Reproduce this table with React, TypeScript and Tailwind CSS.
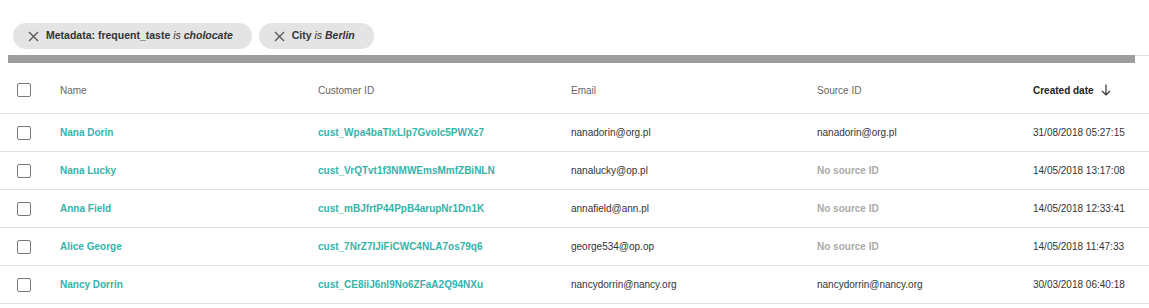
import { Fragment } from "react";

const ROWS = [
  {
    name: "Nana Dorin",
    id: "cust_Wpa4baTlxLlp7GvoIc5PWXz7",
    email: "nanadorin@org.pl",
    source: "nanadorin@org.pl",
    created: "31/08/2018 05:27:15",
  },
  {
    name: "Nana Lucky",
    id: "cust_VrQTvt1f3NMWEmsMmfZBiNLN",
    email: "nanalucky@op.pl",
    source: null,
    created: "14/05/2018 13:17:08",
  },
  {
    name: "Anna Field",
    id: "cust_mBJfrtP44PpB4arupNr1Dn1K",
    email: "annafield@ann.pl",
    source: null,
    created: "14/05/2018 12:33:41",
  },
  {
    name: "Alice George",
    id: "cust_7NrZ7IJiFiCWC4NLA7os79q6",
    email: "george534@op.op",
    source: null,
    created: "14/05/2018 11:47:33",
  },
  {
    name: "Nancy Dorrin",
    id: "cust_CE8iiJ6nl9No6ZFaA2Q94NXu",
    email: "nancydorrin@nancy.org",
    source: "nancydorrin@nancy.org",
    created: "30/03/2018 06:40:18",
  },
];

const COLS = "grid grid-cols-[60px_258px_253px_246px_216px_116px] items-center";

function CloseIcon() {
  return (
    <svg width="11" height="11" viewBox="0 0 11 11" className="shrink-0">
      <path d="M1 1L10 10M10 1L1 10" stroke="#555" strokeWidth="1.3" />
    </svg>
  );
}

function Checkbox() {
  return <div className="ml-[17px] size-[14px] rounded-[2px] border border-[#7a7a7a] bg-white" />;
}

function Chip({ field, value }: { field: string; value: string }) {
  return (
    <div className="flex h-[26px] items-center gap-[7px] rounded-full bg-[#e4e4e4] pl-[15px] pr-[19px] text-[10.5px] text-[#333]">
      <CloseIcon />
      <span>
        <span className="font-bold">{field}</span>{" "}
        <i>is</i> <b className="italic">{value}</b>
      </span>
    </div>
  );
}

export default function App() {
  return (
    <div className="h-[308px] w-[1149px] overflow-hidden bg-white pt-[23px] font-['Liberation_Sans',Arial,sans-serif]">
      <div className="flex gap-[7px] pl-[13px]">
        <Chip field="Metadata: frequent_taste" value="cholocate" />
        <Chip field="City" value="Berlin" />
      </div>

      {/* horizontal scrollbar */}
      <div className="mt-[6px] flex h-2">
        <div className="ml-2 w-[1127px] bg-[#9d9d9d]" />
        <div className="flex-1 border-t border-[#e2e2e2]" />
      </div>

      <div className={`${COLS} h-[51px] border-b border-[#e2e2e2] pt-[4px] text-[10px] text-[#666]`}>
        <Checkbox />
        <span>Name</span>
        <span>Customer ID</span>
        <span>Email</span>
        <span>Source ID</span>
        <span className="flex items-center gap-[7px] font-bold text-[#222]">
          Created date
          <svg width="10" height="12" viewBox="0 0 10 12">
            <path d="M5 0.5V11M1 7L5 11L9 7" stroke="#333" strokeWidth="1.2" fill="none" />
          </svg>
        </span>
      </div>

      {ROWS.map((r) => (
        <Fragment key={r.id}>
          <div className={`${COLS} h-[38px] border-b border-[#e2e2e2] text-[10px] text-[#333]`}>
            <Checkbox />
            <span className="font-bold text-[#36b3a8]">{r.name}</span>
            <span className="font-bold text-[#36b3a8]">{r.id}</span>
            <span>{r.email}</span>
            {r.source ? (
              <span>{r.source}</span>
            ) : (
              <span className="font-bold text-[#aaa]">No source ID</span>
            )}
            <span className="whitespace-nowrap">{r.created}</span>
          </div>
        </Fragment>
      ))}
    </div>
  );
}
